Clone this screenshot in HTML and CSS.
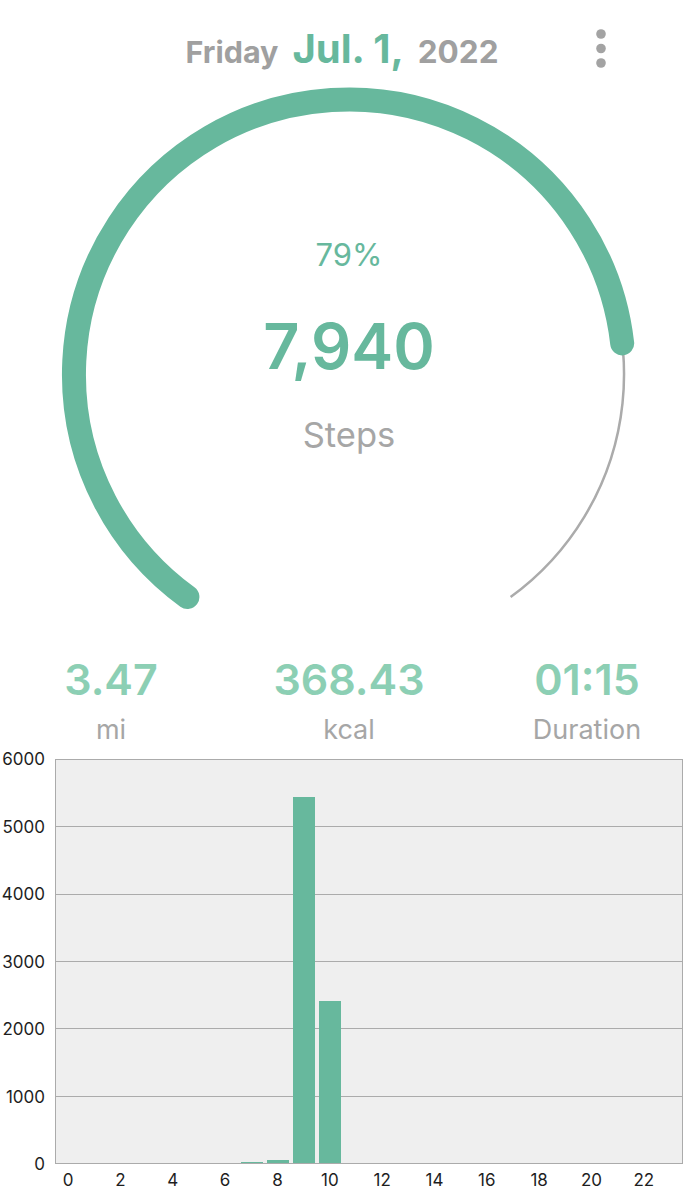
FILE: index.html
```html
<!DOCTYPE html>
<html lang="en">
<head>
<meta charset="utf-8">
<title>Steps</title>
<link rel="stylesheet" href="styles.css">
</head>
<body>
<div class="page">
  <header class="header">
    <div class="date">
      <span class="day">Friday</span>
      <span class="month">Jul. 1,</span>
      <span class="year">2022</span>
    </div>
    <div class="menu">
      <svg width="12" height="40" viewBox="0 0 12 40" aria-hidden="true">
        <circle cx="6" cy="5" r="4.8" fill="#a3a3a3"/>
        <circle cx="6" cy="19.5" r="4.8" fill="#a3a3a3"/>
        <circle cx="6" cy="34" r="4.8" fill="#a3a3a3"/>
      </svg>
    </div>
  </header>

  <section class="gauge">
    <svg class="gauge-ring" width="698" height="560" viewBox="0 0 698 560" aria-hidden="true">
      <path d="M 187.4 522 A 275 275 0 1 1 510.6 522" fill="none" stroke="#ababab" stroke-width="2.5"/>
      <path d="M 187.4 522 A 275 275 0 1 1 622.2 268.4" fill="none" stroke="#67b89d" stroke-width="24" stroke-linecap="round"/>
    </svg>
    <div class="gauge-text">
      <div class="pct">79%</div>
      <div class="count">7,940</div>
      <div class="unit">Steps</div>
    </div>
  </section>

  <section class="stats">
    <div class="stat">
      <div class="stat-value">3.47</div>
      <div class="stat-label">mi</div>
    </div>
    <div class="stat">
      <div class="stat-value">368.43</div>
      <div class="stat-label">kcal</div>
    </div>
    <div class="stat">
      <div class="stat-value">01:15</div>
      <div class="stat-label">Duration</div>
    </div>
  </section>

  <section class="chart">
    <div class="yaxis">
      <span>6000</span><span>5000</span><span>4000</span><span>3000</span><span>2000</span><span>1000</span><span>0</span>
    </div>
    <div class="plot">
      <div class="gridlines">
        <div></div><div></div><div></div><div></div><div></div><div></div>
      </div>
      <div class="bars">
        <div class="slot"></div><div class="slot"></div><div class="slot"></div><div class="slot"></div>
        <div class="slot"></div><div class="slot"></div><div class="slot"></div>
        <div class="slot"><div class="bar" style="height:0.3%"></div></div>
        <div class="slot"><div class="bar" style="height:0.7%"></div></div>
        <div class="slot"><div class="bar" style="height:90.8%"></div></div>
        <div class="slot"><div class="bar" style="height:40.3%"></div></div>
        <div class="slot"></div><div class="slot"></div><div class="slot"></div><div class="slot"></div>
        <div class="slot"></div><div class="slot"></div><div class="slot"></div><div class="slot"></div>
        <div class="slot"></div><div class="slot"></div><div class="slot"></div><div class="slot"></div>
        <div class="slot"></div>
      </div>
    </div>
    <div class="corner"></div>
    <div class="xaxis">
      <span>0</span><span></span><span>2</span><span></span><span>4</span><span></span>
      <span>6</span><span></span><span>8</span><span></span><span>10</span><span></span>
      <span>12</span><span></span><span>14</span><span></span><span>16</span><span></span>
      <span>18</span><span></span><span>20</span><span></span><span>22</span><span></span>
    </div>
  </section>
</div>
</body>
</html>
```

FILE: styles.css
```css
* { box-sizing: border-box; }

html, body {
  margin: 0;
  padding: 0;
  background: #ffffff;
}

body {
  font-family: "Inter", "Roboto", "Liberation Sans", sans-serif;
  color: #222222;
  width: 698px;
  overflow: hidden;
}

.page {
  width: 698px;
}

/* Header */
.header {
  height: 75px;
  display: grid;
  grid-template-columns: 1fr auto 1fr;
  align-items: start;
  padding-top: 29px;
  padding-right: 14px;
}

.date {
  grid-column: 2;
  display: flex;
  align-items: baseline;
  gap: 13px;
  font-weight: 700;
}

.day {
  font-size: 30.5px;
  line-height: 1;
  color: #a0a0a0;
}

.month {
  font-size: 40px;
  line-height: 1;
  color: #67b89d;
  margin-left: 1px;
  margin-right: 1px;
}

.year {
  font-size: 31.5px;
  line-height: 1;
  color: #a0a0a0;
}

.menu {
  grid-column: 3;
  padding-left: 96px;
  margin-top: 0;
}

.menu svg { display: block; }

/* Gauge */
.gauge {
  display: grid;
  height: 560px;
}

.gauge > * {
  grid-area: 1 / 1;
}

.gauge-ring {
  display: block;
}

.gauge-text {
  display: flex;
  flex-direction: column;
  align-items: center;
  padding-top: 164px;
}

.pct {
  font-size: 31px;
  line-height: 31px;
  font-weight: 400;
  color: #67b89d;
}

.count {
  margin-top: 45px;
  font-size: 63px;
  line-height: 63px;
  font-weight: 600;
  color: #67b89d;
}

.unit {
  margin-top: 40px;
  font-size: 34.5px;
  line-height: 34px;
  font-weight: 400;
  color: #a6a6a6;
}

/* Stats */
.stats {
  display: grid;
  grid-template-columns: repeat(3, 238px);
  justify-content: center;
  padding-top: 23px;
}

.stat {
  display: flex;
  flex-direction: column;
  align-items: center;
}

.stat-value {
  font-size: 43px;
  line-height: 43px;
  font-weight: 600;
  color: #8ccfb4;
}

.stat-label {
  margin-top: 15px;
  font-size: 27px;
  line-height: 27px;
  font-weight: 400;
  color: #a6a6a6;
}

/* Chart */
.chart {
  display: grid;
  grid-template-columns: 55px 628px;
  grid-template-rows: 405px auto;
  margin-top: 16px;
}

.yaxis {
  display: flex;
  flex-direction: column;
  justify-content: space-between;
  align-items: flex-end;
  height: 425px;
  margin-top: -10px;
  margin-bottom: -10px;
  padding-right: 10px;
  font-size: 17px;
  line-height: 20px;
  color: #1e1e1e;
}

.plot {
  display: grid;
  border: 1.5px solid #ababab;
  background: #efefef;
}

.plot > * {
  grid-area: 1 / 1;
}

.gridlines {
  display: flex;
  flex-direction: column;
}

.gridlines > div {
  flex: 1;
  border-bottom: 1.5px solid #ababab;
}

.gridlines > div:last-child {
  border-bottom: none;
}

.bars {
  display: flex;
  align-items: stretch;
}

.slot {
  flex: 1;
  display: flex;
  justify-content: center;
  align-items: flex-end;
}

.bar {
  width: 22px;
  background: #67b89d;
}

.xaxis {
  display: flex;
  margin-top: 6px;
  font-size: 17px;
  line-height: 20px;
  color: #1e1e1e;
}

.xaxis span {
  flex: 1;
  text-align: center;
}
```
